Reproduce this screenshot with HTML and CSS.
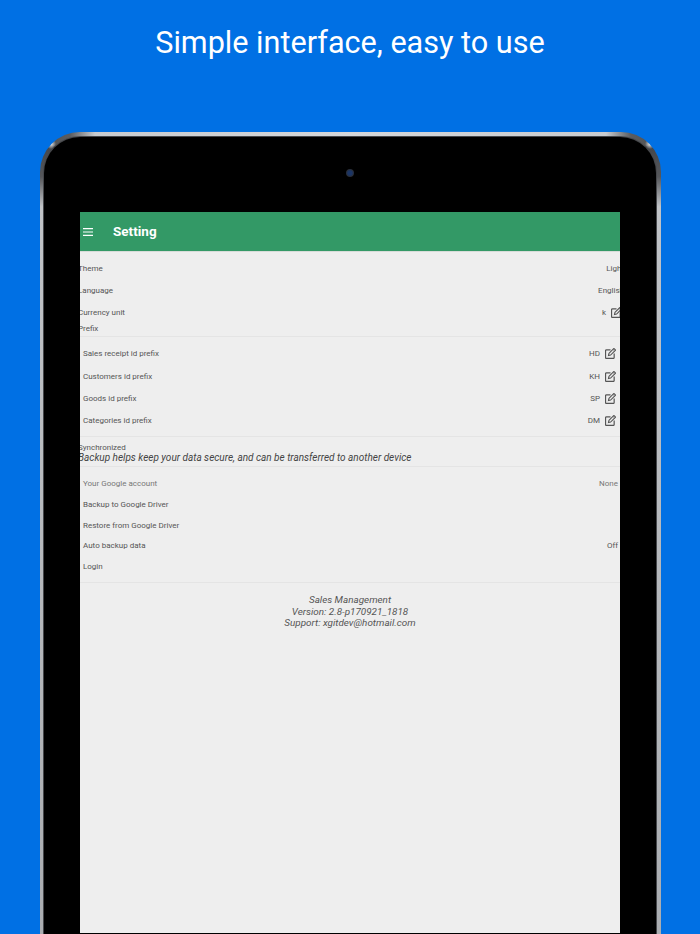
FILE: index.html
```html
<!DOCTYPE html>
<html lang="en">
<head>
<meta charset="UTF-8">
<title>Simple interface, easy to use</title>
<link rel="stylesheet" href="styles.css">
</head>
<body>
  <h1 class="headline">Simple interface, easy to use</h1>
  <div class="device">
    <div class="bezel">
      <div class="camera"></div>
      <div class="screen">
        <div class="appbar">
          <svg class="menu-icon" viewBox="0 0 10 8" width="10" height="8"><path d="M0 .7h10M0 4h10M0 7.300h10" stroke="#fff" stroke-width="1.200" fill="none"/></svg>
          <div class="appbar-title">Setting</div>
        </div>

        <div class="group top-group">
          <div class="row"><span>Theme</span><span>Light</span></div>
          <div class="row"><span>Language</span><span>English</span></div>
          <div class="row"><span>Currency unit</span><span class="value">k
            <svg class="edit-icon" viewBox="0 0 12 12"><use href="#edit"/></svg></span></div>
          <div class="row section-label"><span>Prefix</span></div>
        </div>

        <div class="group prefix-group">
          <div class="row"><span>Sales receipt id prefix</span><span class="value">HD
            <svg class="edit-icon" viewBox="0 0 12 12"><use href="#edit"/></svg></span></div>
          <div class="row"><span>Customers id prefix</span><span class="value">KH
            <svg class="edit-icon" viewBox="0 0 12 12"><use href="#edit"/></svg></span></div>
          <div class="row"><span>Goods id prefix</span><span class="value">SP
            <svg class="edit-icon" viewBox="0 0 12 12"><use href="#edit"/></svg></span></div>
          <div class="row"><span>Categories id prefix</span><span class="value">DM
            <svg class="edit-icon" viewBox="0 0 12 12"><use href="#edit"/></svg></span></div>
        </div>

        <div class="group sync-group">
          <div class="sync-title">Synchronized</div>
          <div class="sync-note">Backup helps keep your data secure, and can be transferred to another device</div>
        </div>

        <div class="group backup-group">
          <div class="row muted"><span>Your Google account</span><span>None</span></div>
          <div class="row"><span>Backup to Google Driver</span></div>
          <div class="row"><span>Restore from Google Driver</span></div>
          <div class="row"><span>Auto backup data</span><span>Off</span></div>
          <div class="row"><span>Login</span></div>
        </div>

        <div class="about">
          <div>Sales Management</div>
          <div>Version: 2.8-p170921_1818</div>
          <div>Support: xgitdev@hotmail.com</div>
        </div>
      </div>
    </div>
  </div>

  <svg class="defs" width="0" height="0">
    <symbol id="edit" viewBox="0 0 12 12">
      <path d="M6 2H1.600C1 2 .6 2.400 .6 3v7.400c0 .6 .4 1 1 1H9c.6 0 1-.4 1-1V6" fill="none" stroke="#555" stroke-width="1.300"/>
      <path d="M4.300 5.900 9.700 .5 11.500 2.300 6.100 7.700 3.800 8.200Z" fill="none" stroke="#555" stroke-width="1.200"/>
      <path d="M8.700 1.500 10.500 3.300" stroke="#555" stroke-width=".8"/>
    </symbol>
  </svg>
</body>
</html>
```

FILE: styles.css
```css
html, body {
  margin: 0;
  height: 934px;
}

body {
  background: #0070e4;
  font-family: Roboto, "Liberation Sans", sans-serif;
  overflow: hidden;
}

.headline {
  margin: 0;
  height: 132px;
  padding-top: 23px;
  box-sizing: border-box;
  text-align: center;
  color: #fff;
  font-size: 30.600px;
  line-height: 40px;
  font-weight: 400;
}

/* metal edge: highlights on the corners, a top strip, then the long sides */
.device {
  margin: 0 39.500px;
  height: 830px;
  padding: 4.500px 4.500px 0;
  border-radius: 40px 40px 0 0;
  background:
    radial-gradient(circle at 11px 12px, #e8eaec 0, rgba(232, 234, 236, 0) 5px),
    radial-gradient(circle at calc(100% - 11px) 12px, #e8eaec 0, rgba(232, 234, 236, 0) 5px),
    linear-gradient(90deg, #6a6d72 0, #555 12px, #5a5c60 30px, #c8cbcf 55px, #d4d6d9 50%, #c8cbcf calc(100% - 55px), #5a5c60 calc(100% - 30px), #555 calc(100% - 12px), #6a6d72 100%) top / 100% 14px no-repeat,
    linear-gradient(180deg, #44464a 14px, #55575b 45px, #c0c3c7 75px, #a9acb0 100%) left / 100% 100% no-repeat,
    #8a8d92;
}

.bezel {
  position: relative;
  height: 100%;
  box-sizing: border-box;
  padding: 75.500px 36px 0;
  border-radius: 36px 36px 0 0;
  background: #000;
  box-shadow: 0 0 0 1px #45474b;
}

.camera {
  position: absolute;
  top: 32.500px;
  left: 301.500px;
  width: 8px;
  height: 8px;
  border-radius: 50%;
  background: radial-gradient(circle, #1b3566 0 35%, #2a2d33 70%, #0a0a0a);
}

.screen {
  height: 721px;
  background: #eee;
  overflow: hidden;
  color: #555;
  font-size: 8px;
}

.appbar {
  display: flex;
  align-items: center;
  height: 39px;
  background: #339966;
  border-bottom: 1px solid #d8dcd9;
  color: #fff;
}

.menu-icon {
  margin-left: 3px;
}

.appbar-title {
  margin-left: 20px;
  margin-bottom: 1px;
  font-size: 13.500px;
  font-weight: 700;
}

.group {
  margin: 0 -2px;
  border-bottom: 1px solid #e4e4e4;
}

.row {
  display: flex;
  justify-content: space-between;
  align-items: center;
  height: 22px;
}

.value {
  display: flex;
  align-items: center;
  gap: 5px;
}

.edit-icon {
  width: 11px;
  height: 11px;
}

.top-group {
  height: 85px;
  padding-top: 5px;
  box-sizing: border-box;
  margin-right: -4px;
}

.top-group .value {
  margin-right: 2px;
}

.section-label {
  height: 10px;
}

.prefix-group {
  margin: 0;
  padding: 5.500px 4px 4px 3px;
}

.prefix-group .row {
  height: 22.400px;
}

.sync-group {
  height: 30px;
  box-sizing: border-box;
  padding-top: 6px;
}

.sync-title {
  line-height: 9px;
}

.sync-note {
  font-size: 10px;
  font-style: italic;
  line-height: 11px;
  color: #444;
}

.backup-group {
  margin: 0;
  padding: 6px 2px 5.400px 3px;
}

.backup-group .row {
  height: 20.800px;
}

.muted {
  color: #777;
}

.about {
  padding-top: 11px;
  text-align: center;
  font-size: 9.900px;
  font-style: italic;
  line-height: 11.200px;
}

.defs {
  position: absolute;
}
```
